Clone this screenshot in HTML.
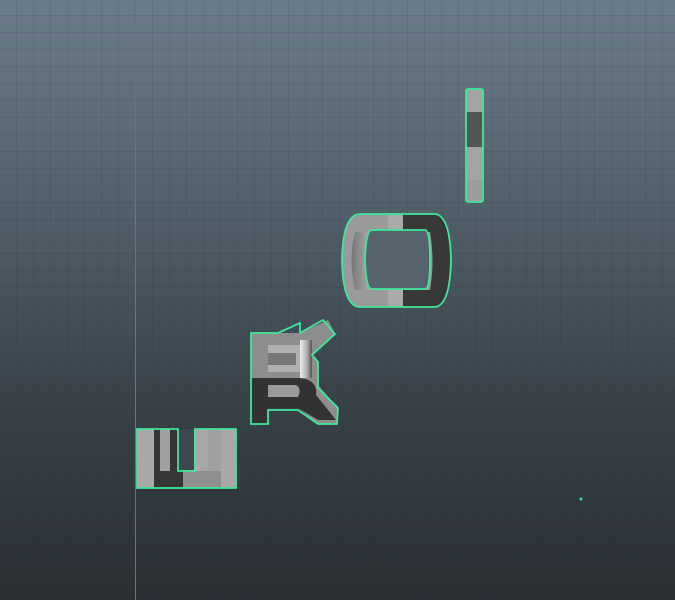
<!DOCTYPE html>
<html><head><style>
html,body{margin:0;padding:0;}
body{width:675px;height:600px;overflow:hidden;background:linear-gradient(#6a7b89 0%,#52606b 35%,#3a434a 65%,#2a2f33 100%);position:relative;}
.grid{position:absolute;inset:0;background-image:repeating-linear-gradient(90deg,transparent 0 16px,rgba(30,40,50,.1) 16px 17px),repeating-linear-gradient(0deg,transparent 0 16px,rgba(30,40,50,.1) 16px 17px);background-position:0 10px;}
svg{position:absolute;left:0;top:0;}
</style></head><body>
<div class="grid"></div>
<svg width="675" height="600" viewBox="0 0 675 600">
<defs>
<linearGradient id="og" x1="0" x2="1"><stop offset="0" stop-color="#777"/><stop offset=".3" stop-color="#bbb"/><stop offset="1" stop-color="#999"/></linearGradient>
<linearGradient id="og2" x1="0" x2="1"><stop offset="0" stop-color="#eee"/><stop offset=".6" stop-color="#aaa"/><stop offset="1" stop-color="#555"/></linearGradient>
</defs>
<rect x="135" y="0" width="1" height="600" fill="#4f8a4a"/>
<!-- I -->
<rect x="466" y="89" width="17" height="113" fill="#a3a3a3"/>
<rect x="466" y="112" width="17" height="35" fill="#555"/>
<rect x="466" y="180" width="17" height="20" fill="#9c9c9c"/>
<rect x="466" y="89" width="17" height="113" rx="2" fill="none" stroke="#3ee89a" stroke-width="1.8"/>
<!-- O -->
<path d="M360 214 H434 Q450 214 451 260 Q450 307 434 307 H360 Q343 307 342 260 Q343 214 360 214Z" fill="#9a9a9a"/>
<path d="M403 214 H434 Q450 214 451 260 Q450 307 434 307 H403Z" fill="#383838"/>
<rect x="388" y="214" width="15" height="93" fill="#aaa"/>
<path d="M355 232 Q348 260 355 290 H430 Q435 260 430 232Z" fill="url(#og)"/>
<path d="M372 230 H425 Q430 230 430 260 Q430 289 425 289 H372 Q366 289 365 260 Q366 230 372 230Z" fill="#56636d"/>
<path d="M360 214 H434 Q450 214 451 260 Q450 307 434 307 H360 Q343 307 342 260 Q343 214 360 214Z" fill="none" stroke="#3ee89a" stroke-width="1.8"/>
<path d="M372 230 H425 Q430 230 430 260 Q430 289 425 289 H372 Q366 289 365 260 Q366 230 372 230Z" fill="none" stroke="#3ee89a" stroke-width="1.8"/>
<!-- R -->
<path d="M251 333 H300 L328 320 L335 334 L312 355 L318 362 L318 385 L338 408 L337 424 H318 L298 408 H268 V424 H251Z" fill="#8d8d8d"/>
<path d="M251 378 H300 Q318 380 316 395 L336 420 H318 L298 408 H268 V424 H251Z" fill="#333"/>
<path d="M268 385 H296 Q302 388 298 397 H268Z" fill="#9a9a9a"/>
<path d="M300 340 H312 V378 H300Z" fill="url(#og2)"/>
<path d="M268 345 H300 V372 H268Z" fill="#b0b0b0"/>
<path d="M268 353 H296 V365 H268Z" fill="#777"/>
<path d="M251 333 L278 333 L300 323 L300 333 L323 320 L335 334 L312 355 L318 362 L318 388 L338 408 L337 424 L318 424 L298 410 L268 410 L268 424 L251 424Z" fill="none" stroke="#3ee89a" stroke-width="1.8"/>
<!-- U -->
<rect x="137" y="429" width="99" height="59" fill="#a8a8a8"/>
<rect x="154" y="429" width="29" height="59" fill="#383536"/>
<rect x="160" y="429" width="10" height="42" fill="#a0a0a0"/>
<rect x="183" y="471" width="38" height="17" fill="#8f8f8f"/>
<rect x="208" y="429" width="13" height="42" fill="#a0a0a0"/>
<path d="M179 429 H194 V470 H179Z" fill="#3f4850"/>
<path d="M137 429 H178 V471 H195 V429 H236 V488 H137Z" fill="none" stroke="#3ee89a" stroke-width="1.8"/>
<circle cx="581" cy="499" r="1.5" fill="#3ee89a"/>
</svg>
</body></html>
